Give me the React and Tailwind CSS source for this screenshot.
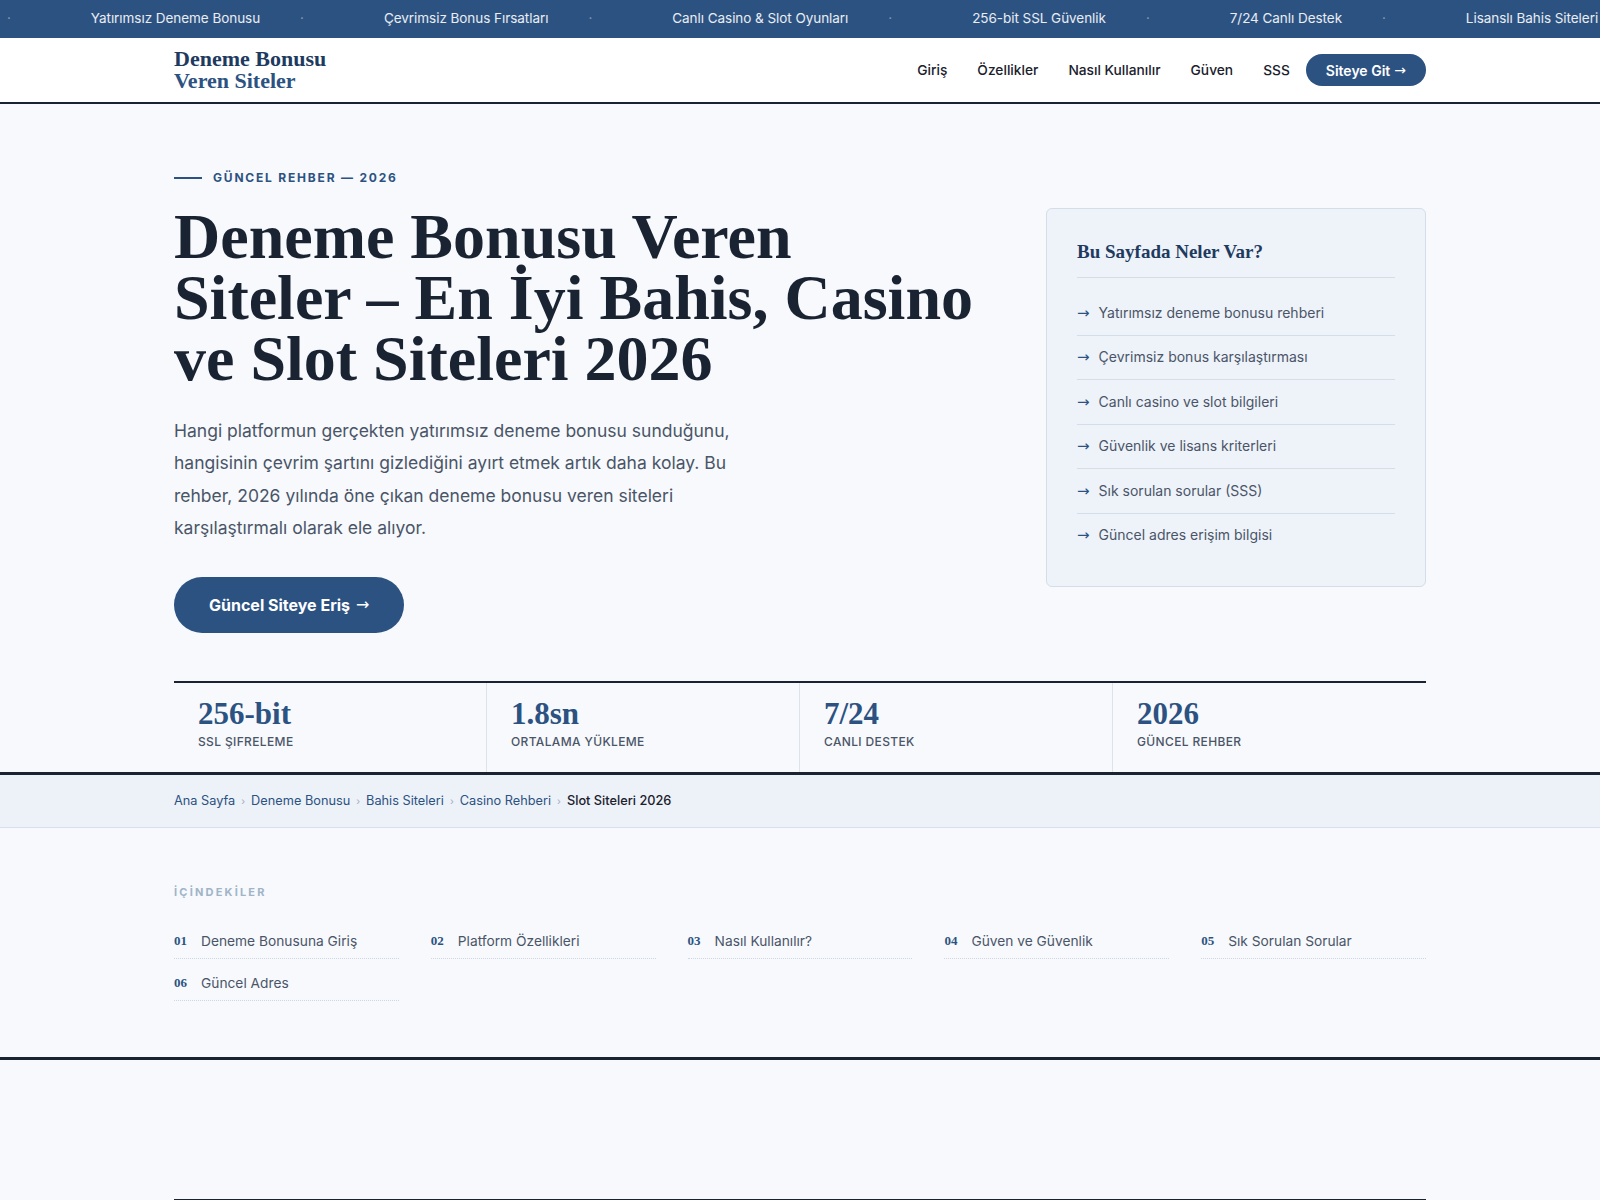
import React, { Fragment } from 'react';

const tickerItems = [
  'Yatırımsız Deneme Bonusu',
  'Çevrimsiz Bonus Fırsatları',
  'Canlı Casino & Slot Oyunları',
  '256-bit SSL Güvenlik',
  '7/24 Canlı Destek',
  'Lisanslı Bahis Siteleri',
];

const navLinks = ['Giriş', 'Özellikler', 'Nasıl Kullanılır', 'Güven', 'SSS'];

const summary = [
  'Yatırımsız deneme bonusu rehberi',
  'Çevrimsiz bonus karşılaştırması',
  'Canlı casino ve slot bilgileri',
  'Güvenlik ve lisans kriterleri',
  'Sık sorulan sorular (SSS)',
  'Güncel adres erişim bilgisi',
];

const stats = [
  { value: '256-bit', label: 'SSL Şifreleme' },
  { value: '1.8sn', label: 'Ortalama Yükleme' },
  { value: '7/24', label: 'Canlı Destek' },
  { value: '2026', label: 'Güncel Rehber' },
];

const crumbs = ['Ana Sayfa', 'Deneme Bonusu', 'Bahis Siteleri', 'Casino Rehberi'];

const toc = [
  'Deneme Bonusuna Giriş',
  'Platform Özellikleri',
  'Nasıl Kullanılır?',
  'Güven ve Güvenlik',
  'Sık Sorulan Sorular',
  'Güncel Adres',
];

// thin long arrow, like the one in the reference
const Arrow = () => <span className="font-['DejaVu_Sans',sans-serif] font-normal">→</span>;

export default function App() {
  return (
    <div className="min-h-screen bg-[#f7f9fc] font-['Inter',sans-serif] text-[#1a202c]">
      {/* ticker */}
      <div className="flex h-[38px] items-center overflow-hidden whitespace-nowrap bg-[#2c5282] pb-[1px] pl-[7px] text-[13.5px] tracking-[-0.05px] text-white/90">
        {tickerItems.map((t) => (
          <Fragment key={t}>
            <span className="text-white/40">·</span>
            <span className="pl-20 pr-10">{t}</span>
          </Fragment>
        ))}
        <span className="text-white/40">·</span>
      </div>

      {/* header */}
      <header className="border-b-2 border-[#1a2332] bg-white">
        <div className="mx-auto flex h-16 w-[1252px] items-center justify-between">
          <a className="font-['Liberation_Serif',serif] text-[22px] font-bold leading-[22px]">
            <span className="block text-[#1e3a5f]">Deneme Bonusu</span>
            <span className="block text-[#2c5282]">Veren Siteler</span>
          </a>
          <nav className="flex items-center gap-[16px]">
            <div className="flex gap-[30px] text-[13.75px] font-medium text-[#1a202c]">
              {navLinks.map((l) => (
                <a key={l}>{l}</a>
              ))}
            </div>
            <a className="flex h-8 items-center gap-1 rounded-full bg-[#2c5282] px-[20px] text-[14px] font-semibold text-white">
              Siteye Git <Arrow />
            </a>
          </nav>
        </div>
      </header>

      {/* hero */}
      <section className="pt-[66px]">
        <div className="mx-auto w-[1252px]">
          <div className="flex items-start justify-between">
            <div>
              <div className="flex items-center gap-[11px]">
                <span className="h-[2px] w-7 bg-[#2c5282]"></span>
                <span className="text-[12px] font-bold leading-4 tracking-[0.15em] text-[#2c5282]">
                  GÜNCEL REHBER — 2026
                </span>
              </div>
              <h1 className="mt-5 font-['Liberation_Serif',serif] text-[64px] font-bold leading-[61px] text-[#1a2332]">
                Deneme Bonusu Veren
                <br />
                Siteler – En İyi Bahis, Casino
                <br />
                ve Slot Siteleri 2026
              </h1>
              <p className="mt-[26px] max-w-[570px] text-[17.5px] leading-[32.4px] text-[#4a5568]">
                Hangi platformun gerçekten yatırımsız deneme bonusu sunduğunu, hangisinin çevrim şartını
                gizlediğini ayırt etmek artık daha kolay. Bu rehber, 2026 yılında öne çıkan deneme bonusu
                veren siteleri karşılaştırmalı olarak ele alıyor.
              </p>
              <a className="mt-8 inline-flex h-14 items-center gap-[6px] rounded-full bg-[#2c5282] px-[35px] text-[16px] font-bold text-white">
                Güncel Siteye Eriş <Arrow />
              </a>
            </div>

            <aside className="mt-[38px] w-[380px] rounded-md border border-[#d5dde9] bg-[#eef2f9] px-[30px] pb-[29px] pt-[31px]">
              <h2 className="border-b border-[#d5dde9] pb-[13px] font-['Liberation_Serif',serif] text-[19px] font-bold leading-6 text-[#1e3a5f]">
                Bu Sayfada Neler Var?
              </h2>
              <ul className="mt-[13px]">
                {summary.map((s, i) => (
                  <li
                    key={s}
                    className={
                      i < summary.length - 1
                        ? 'flex items-center gap-[9px] border-b border-[#d5dde9] py-[11.75px] text-[14px] leading-5 text-[#4a5568]'
                        : 'flex items-center gap-[9px] py-[11.75px] text-[14px] leading-5 text-[#4a5568]'
                    }
                  >
                    <span className="text-[15px] text-[#2c5282]">
                      <Arrow />
                    </span>
                    {s}
                  </li>
                ))}
              </ul>
            </aside>
          </div>

          {/* stats */}
          <div className="mt-12 grid grid-cols-4 border-t-2 border-[#1a2332]">
            {stats.map((s, i) => (
              <div
                key={s.label}
                className={
                  i < 3
                    ? 'border-r border-[#dde3ec] px-6 pb-[22px] pt-[15px]'
                    : 'px-6 pb-[22px] pt-[15px]'
                }
              >
                <div className="font-['Liberation_Serif',serif] text-[31px] font-bold leading-8 text-[#2c5282]">
                  {s.value}
                </div>
                <div className="mt-1 text-[12px] font-medium uppercase leading-4 tracking-[0.03em] text-[#4a5568]">
                  {s.label}
                </div>
              </div>
            ))}
          </div>
        </div>
      </section>

      {/* breadcrumb */}
      <div className="border-b border-t-[3px] border-b-[#d9e0ea] border-t-[#1a2332] bg-[#edf1f8]">
        <div className="mx-auto flex w-[1252px] items-center py-4 text-[12.75px] leading-5">
          {crumbs.map((c) => (
            <Fragment key={c}>
              <a className="text-[#2c5282]">{c}</a>
              <span className="mx-[6px] text-[10px] text-[#a0aec0]">›</span>
            </Fragment>
          ))}
          <span className="font-medium text-[#1a202c]">Slot Siteleri 2026</span>
        </div>
      </div>

      {/* table of contents */}
      <section className="py-14">
        <div className="mx-auto w-[1252px]">
          <div className="text-[11px] font-bold leading-4 tracking-[0.2em] text-[#a0b4c8]">İÇİNDEKİLER</div>
          <div className="mt-[21px] grid grid-cols-5 gap-x-8 gap-y-1">
            {toc.map((t, i) => (
              <a
                key={t}
                className="flex items-center gap-[14px] border-b border-dotted border-[#cfd7e3] pb-[7px] pt-[10px] leading-5"
              >
                <span className="font-['Liberation_Serif',serif] text-[13px] font-bold text-[#2c5282]">
                  0{i + 1}
                </span>
                <span className="text-[13.75px] text-[#4a5568]">{t}</span>
              </a>
            ))}
          </div>
        </div>
      </section>

      {/* next section */}
      <section className="border-t-[3px] border-[#1a2332] pt-[139px]">
        <div className="mx-auto w-[1252px] border-t-2 border-[#1a2332]"></div>
      </section>
    </div>
  );
}
